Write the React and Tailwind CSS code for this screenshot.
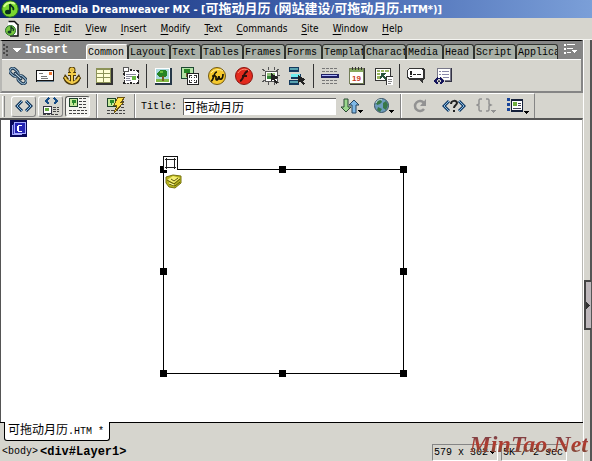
import React from "react";

const mono = "font-['Liberation_Mono','Noto_Sans_CJK_SC',monospace]";
const ui = "font-['DejaVu_Sans_Condensed','Noto_Sans_CJK_SC',sans-serif]";

function Svg({ w = 18, h = 18, children, smooth }) {
  return (
    <svg width={w} height={h} viewBox={`0 0 ${w} ${h}`} fill="none" shapeRendering={smooth ? "auto" : "crispEdges"} aria-hidden="true" className="block shrink-0">
      {children}
    </svg>
  );
}

const Logo = () => (
  <Svg w={18} h={18} smooth>
    <circle cx="9" cy="9" r="8.2" fill="#78d62f" stroke="#276b1b" />
    <path d="M3 7a7 6 0 0 1 11-3" stroke="#d4ff8b" strokeWidth="2" />
    <path d="M9 4v7M9 4c1 3 5 3 3 6" stroke="#06301b" strokeWidth="1.8" />
    <ellipse cx="7" cy="12" rx="3" ry="2.3" fill="#06301b" />
  </Svg>
);

const DocLogo = () => (
  <Svg w={15} h={17} smooth>
    <path d="M3 1h7l3 3v11H3z" fill="#fff" />
    <path d="M3.5 1.5h6l3 3M13 4v12H5" stroke="#111" strokeWidth="1.5" />
    <circle cx="5.5" cy="10.5" r="5" fill="#79c83e" stroke="#286f2c" />
    <path d="M6 6v5M6 6c0 3 4 2 2 5" stroke="#123b25" strokeWidth="1.3" />
    <ellipse cx="4.5" cy="12" rx="2" ry="1.5" fill="#123b25" />
  </Svg>
);

const Link = () => (
  <Svg smooth>
    <g transform="rotate(43 9 9)" strokeLinecap="round">
      <rect x="-1" y="6" width="9" height="6" rx="3" stroke="#17334e" strokeWidth="3" />
      <rect x="10" y="6" width="9" height="6" rx="3" stroke="#17334e" strokeWidth="3" />
      <rect x="-1" y="6" width="9" height="6" rx="3" stroke="#9fc1d8" />
      <rect x="10" y="6" width="9" height="6" rx="3" stroke="#9fc1d8" />
      <path d="M5 9h8" stroke="#17334e" strokeWidth="3" />
      <path d="M5 9h8" stroke="#c8dce7" />
    </g>
  </Svg>
);
const Mail = () => (
  <Svg>
    <path d="M0 3h18v12H0z" fill="#111" />
    <path d="M1 4h16v9H1z" fill="#fff" />
    <path d="M13 5h3v3h-3z" fill="#ed7835" />
    <path d="M3 6h4M5 9h6M5 11h7" stroke="#777" />
    <path d="M1 14h17" stroke="#6c8292" />
  </Svg>
);
const Anchor = () => (
  <Svg smooth>
    <g stroke="#4d3908" strokeWidth="4"><circle cx="9" cy="3" r="1.5" /><path d="M9 5v11M5 7h8M2 10c1 4 4 6 7 6s6-2 7-6" /></g>
    <path d="M0 12l2-5 4 5zM18 12l-2-5-4 5z" fill="#4d3908" />
    <g stroke="#f2cb48" strokeWidth="2"><circle cx="9" cy="3" r="1.5" /><path d="M9 5v11M5 7h8M2 10c1 4 4 5 7 6 3-1 6-2 7-6" /></g>
  </Svg>
);
const TableIcon = () => (
  <Svg>
    <path d="M1 1h17v17H1z" fill="#333" />
    <path d="M1 1h15v15H1z" fill="#8c9358" />
    <path d="M2 3h6v3H2zM9 3h6v3H9zM2 7h6v3H2zM9 7h6v3H9zM2 11h6v4H2zM9 11h6v4H9z" fill="#ffffd5" />
  </Svg>
);
const Layer = () => (
  <Svg>
    <path d="M2 3h14v13H2z" fill="#fff" stroke="#333" strokeDasharray="2 1" />
    <path d="M1 0h5v4H1z" fill="#fff" stroke="#555" />
    <path d="M4 7h10M4 9h6M4 11h4M4 13h5" stroke="#889" />
    <path d="M10 9h4v4h-4z" fill="#68b842" />
    <path d="M1 6h2v2H1zM15 3h2v2h-2zM15 9h2v2h-2zM15 15h2v2h-2zM8 15h2v2H8zM1 15h2v2H1zM8 2h2v2H8z" fill="#222" />
  </Svg>
);
const Picture = () => (
  <Svg>
    <path d="M1 1h17v17H1z" fill="#263848" /><path d="M1 1h15v15H1z" fill="#fff" />
    <path d="M2 2h13v13H2z" fill="#abd9df" /><path d="M2 12h13v3H2z" fill="#82b945" />
    <path d="M6 3h5l2 2v3l-2 2H5L3 8V6z" fill="#258424" /><path d="M6 4h3v2H6z" fill="#68bf3c" /><path d="M8 9h2v5H8z" fill="#765b27" />
  </Svg>
);
const Placeholder = () => (
  <Svg>
    <path d="M0 0h13v12H0z" fill="#1d4731" /><path d="M1 1h11v10H1z" fill="#b4e2a6" />
    <path d="M3 2h6v4H3z" fill="#258424" /><path d="M5 6h2v4H5z" fill="#765b27" />
    <path d="M6 6h12v12H6z" fill="#222" /><path d="M7 7h10v10H7z" fill="#fff" />
    <path d="M8 8h3v1H9v2H8zM16 8h-3v1h2v2h1zM8 16h3v-1H9v-2H8zM16 16h-3v-1h2v-2h1zM10 10h1v1h-1zM13 10h1v1h-1zM10 13h1v1h-1zM13 13h1v1h-1z" fill="#333" />
  </Svg>
);
const Fireworks = () => (
  <Svg smooth>
    <circle cx="9" cy="9" r="8.5" fill="#f5c82c" stroke="#715812" /><path d="M3 6c2-3 8-5 12-2" stroke="#fff09b" />
    <path d="M3 14c3 0 2-9 6-9M4 9h4M8 9v3c0 2 3 1 3-3 0 5 4 4 4-2" stroke="#171305" strokeWidth="1.7" />
  </Svg>
);
const Flash = () => (
  <Svg smooth>
    <circle cx="9" cy="9" r="8.5" fill="#e32a1d" stroke="#8b1611" /><path d="M3 6c2-4 8-5 11-2" stroke="#ff8b72" />
    <path d="M5 14c4-1 3-9 8-10M7 9h5" stroke="#32110d" strokeWidth="2" />
  </Svg>
);
const Rollover = () => (
  <Svg>
    <path d="M0 2l3 2M6 0v3M12 0v3M17 2l-3 2M0 8h3M15 8h3M0 15l3-2M6 15v3M12 15v3M17 16l-3-3" stroke="#555" />
    <path d="M3 4h12v10H3z" fill="#fff" stroke="#555" /><path d="M5 6h8v6H5z" fill="#90bd79" /><path d="M5 9h5v3H5z" fill="#328537" />
    <path d="M9 6l8 5-4 1 3 4-2 1-3-5-2 2z" fill="#222" />
  </Svg>
);
const NavBar = () => (
  <Svg>
    <path d="M0 0h10v5H0zM2 7h10v5H2zM0 13h10v5H0z" fill="#143a5e" />
    <path d="M1 1h8v2H1zM1 14h8v2H1z" fill="#58a2af" /><path d="M2 7h9v3H2z" fill="#70eef0" />
    <path d="M9 8l8 5-4 1 3 3-2 1-3-4-2 2z" fill="#222" />
  </Svg>
);
const Rule = () => (
  <Svg>
    <path d="M1 1h16M1 4h16M1 13h16M1 16h16" stroke="#777" strokeDasharray="3 1" />
    <path d="M0 7h18v4H0z" fill="#202063" /><path d="M1 8h15v1H1z" fill="#aeb8ff" />
  </Svg>
);
const DateIcon = () => (
  <Svg>
    <path d="M2 1h15v17H2z" fill="#333" /><path d="M1 1h14v15H1z" fill="#fff" stroke="#727d56" />
    <path d="M2 2h13v3H2z" fill="#85a85e" /><path d="M4 0v3M7 0v3M10 0v3M13 0v3" stroke="#333" />
    <text x="4" y="14" fontSize="8" fontFamily="Liberation Sans" fontWeight="bold" fill="#c83928">19</text>
  </Svg>
);
const Tabular = () => (
  <Svg>
    <path d="M0 1h16v13H0z" fill="#333" /><path d="M1 2h14v11H1z" fill="#fff" />
    <path d="M2 3h3v2H2zM6 3h3v2H6zM10 3h4v2h-4zM2 6h3v2H2zM2 9h3v3H2z" fill="#9ab65f" />
    <path d="M6 6h5L9 9l4 4-2 1-4-4-2 2z" fill="#28533b" />
    <path d="M11 9h7v9h-7z" fill="#fff" stroke="#333" /><path d="M13 12h4M13 14h4M13 16h3" stroke="#888" />
  </Svg>
);
const Comment = () => (
  <Svg>
    <path d="M2 1h14l2 2v9l-2 1v4l-4-4H2l-2-2V3z" fill="#333" /><path d="M2 2h13l1 2v7H2l-1-2V4z" fill="#fff" />
    <path d="M3 4h2v4H3zM3 9h2v1H3zM6 7h3v1H6zM10 7h4v1h-4z" fill="#222" />
  </Svg>
);
const TagIcon = () => (
  <Svg>
    <path d="M3 1h15v14H3z" fill="#334" /><path d="M3 1h13v12H3z" fill="#fff" stroke="#778" />
    <path d="M5 4h2M8 4h7M5 7h2M8 7h7M9 10h6" stroke="#88a" />
    <path d="M4 11l-3 3 3 3M6 11l3 3-3 3" stroke="#d6d5ce" strokeWidth="4" />
    <path d="M4 11l-3 3 3 3M6 11l3 3-3 3" stroke="#15155b" strokeWidth="2" />
  </Svg>
);
const groups = [
  [["Hyperlink", Link], ["Email Link", Mail], ["Named Anchor", Anchor]],
  [["Insert Table", TableIcon], ["Draw Layer", Layer]],
  [["Image", Picture], ["Image Placeholder", Placeholder], ["Fireworks HTML", Fireworks], ["Flash", Flash], ["Rollover Image", Rollover], ["Navigation Bar", NavBar]],
  [["Horizontal Rule", Rule], ["Date", DateIcon], ["Tabular Data", Tabular]],
  [["Comment", Comment], ["Tag Chooser", TagIcon]],
];

const tabs = [
  ["Common", "w-[42px]"], ["Layout", "w-[42px]"], ["Text", "w-[31px]"], ["Tables", "w-[42px]"],
  ["Frames", "w-[42px]"], ["Forms", "w-[37px]"], ["Templates", "w-[42px]"], ["Characters", "w-[42px]"],
  ["Media", "w-[37px]"], ["Head", "w-[31px]"], ["Script", "w-[42px]"], ["Application", "w-[42px]"],
];

const menus = ["File", "Edit", "View", "Insert", "Modify", "Text", "Commands", "Site", "Window", "Help"];

const CodeView = () => (
  <Svg w={18} h={12} smooth><path d="M7 1L2 6l5 5M11 1l5 5-5 5" stroke="#173759" strokeWidth="3" /><path d="M7 1L2 6l5 5M11 1l5 5-5 5" stroke="#8bc1e8" /></Svg>
);
function PageShape() {
  return <><path d="M0 1h9v9H0z" fill="#1d432b" /><path d="M1 2h7v7H1z" fill="#c6e99a" /><path d="M3 3h4v3H3zM4 6h1v2H4z" fill="#27892c" /><path d="M10 1h8M10 4h8M10 7h8M10 10h8M0 13h18M0 16h18" stroke="#444" strokeDasharray="3 1" /></>;
}
const SplitView = () => (
  <Svg>
    <path d="M7 1L4 4l3 3M12 1l3 3-3 3" stroke="#174d87" strokeWidth="2" />
    <path d="M1 9h8v7H1z" fill="#fff" stroke="#334" /><path d="M3 11h4v3H3z" fill="#65a83d" />
    <path d="M11 10h6M11 12h6M11 14h6M1 17h16" stroke="#444" strokeDasharray="3 1" />
  </Svg>
);
const DesignView = () => <Svg><PageShape /></Svg>;
const LiveData = () => (
  <Svg><PageShape /><path d="M11 0h7l-4 5h3L7 16l3-8H7z" fill="#ffe044" stroke="#6b5414" /></Svg>
);
const Drop = () => <path d="M0 0h5v1H4v1H3v1H2V2H1V1H0z" fill="currentColor" />;
const Transfer = () => (
  <Svg w={22} h={16} smooth>
    <path d="M3 1h4v8h3l-5 5-5-5h3z" fill="#9bd68d" stroke="#2b4a35" />
    <path d="M11 15h4V7h3l-5-5-5 5h3z" fill="#7eb8e7" stroke="#24435d" />
    <g transform="translate(17 12)"><Drop /></g>
  </Svg>
);
const Globe = () => (
  <Svg w={20} h={16} smooth>
    <circle cx="7.5" cy="7.5" r="7" fill="#6d9cbc" stroke="#375062" />
    <path d="M3 3l4-2 1 3-2 2-3 1-1-2zM9 5l3-2 2 4-2 5-3-2zM4 9l4 2-2 3-3-2z" fill="#397747" />
    <path d="M2 5c1-3 4-4 6-3" stroke="#d5edf8" /><g transform="translate(15 12)"><Drop /></g>
  </Svg>
);
const Reload = () => (
  <Svg w={14} h={14} smooth><path d="M11 10a5 5 0 1 1 0-6" stroke="#929292" strokeWidth="2.5" /><path d="M13 0v7H7z" fill="#929292" /></Svg>
);
const Reference = () => (
  <Svg w={24} h={14} smooth>
    <path d="M7 2L2 7l5 5M17 2l5 5-5 5" stroke="#153c67" strokeWidth="3" /><path d="M7 2L2 7l5 5M17 2l5 5-5 5" stroke="#86bce4" />
    <path d="M9 5c0-4 6-4 6-1 0 2-3 2-3 5M12 11v2" stroke="#222" strokeWidth="2" />
  </Svg>
);
const Braces = () => (
  <Svg w={20} h={16} smooth>
    <path d="M6 1H4L3 2v4L1 7l2 1v4l1 1h2M10 1h2l1 1v4l2 1-2 1v4l-1 1h-2" stroke="#929292" strokeWidth="1.5" />
    <g transform="translate(15 12)" color="#929292"><Drop /></g>
  </Svg>
);
const Options = () => (
  <Svg w={22} h={16}>
    <path d="M0 0h3v3H0zM0 5h3v3H0zM0 10h3v3H0z" fill="#17449a" /><path d="M4 1h12v13H4z" fill="#15203a" /><path d="M5 3h10v9H5z" fill="#fff" />
    <path d="M6 4h4v4H6z" fill="#70ae3e" /><path d="M11 5h3M11 7h3M6 10h8" stroke="#445" /><g transform="translate(17 13)"><Drop /></g>
  </Svg>
);

function ToolButton({ label, className = "", children }) {
  return <button type="button" aria-label={label} className={`flex h-[21px] shrink-0 items-center justify-center ${className}`}>{children}</button>;
}

function SelectedLayer() {
  const handles = ["-left-1 -top-1", "left-[115px] -top-1", "-right-1 -top-1", "-left-1 top-[98px]", "-right-1 top-[98px]", "-left-1 -bottom-1", "left-[115px] -bottom-1", "-right-1 -bottom-1"];
  return (
    <div className="absolute left-[162px] top-[49px] h-[205px] w-[241px] border border-black">
      {handles.map((place) => <span key={place} className={`absolute size-[7px] bg-black ${place}`} />)}
      <span className="absolute -left-px -top-[14px] bg-white">
        <Svg w={15} h={14}><path d="M0 0h15v14h-1V1H1v13H0z" fill="#111" /><path d="M2 3h11v1H2zM2 11h11v1H2zM3 2h1v11H3zM11 2h1v11h-1z" fill="#222" /></Svg>
      </span>
      <span className="absolute left-px top-1">
        <Svg w={17} h={15} smooth>
          <path d="M1 3l7-2 8 1v7l-6 5-6-1-3-4z" fill="#b8b51d" stroke="#787410" />
          <path d="M2 6l6-4 7 2-6 5z" fill="#f5ef74" /><path d="M2 6l7 4 6-5M6 5l3 2 4-3M4 10l6 2 5-4" stroke="#5d5911" /><path d="M4 9l5 2" stroke="#ffffb0" />
        </Svg>
      </span>
    </div>
  );
}

export default function App() {
  return (
    <div className={`relative flex min-h-screen flex-col overflow-hidden bg-[#d6d5ce] text-[10px] text-black ${ui}`}>
      <header className="flex h-[18px] items-center gap-px bg-linear-to-r from-[#0b2871] via-[#3e5eaa] to-[#7b9fd8] pl-px font-bold whitespace-nowrap text-white">
        <Logo />
        <h1 className="text-[13px] leading-[18px]"><span className="text-[11px]">Macromedia Dreamweaver MX - [</span>可拖动月历<span className="text-[11px]"> (</span>网站建设<span className="text-[11px]">/</span>可拖动月历<span className="text-[11px]">.HTM*)]</span></h1>
      </header>
      <nav className="flex h-[22px] items-center border-b border-[#f4f4f0] pl-[5px]">
        <DocLogo />
        <div className="flex gap-[14px] pl-[5px]">
          {menus.map((m) => (
            <button type="button" key={m} className="leading-[16px]"><span className="underline underline-offset-2">{m[0]}</span>{m.slice(1)}</button>
          ))}
        </div>
      </nav>

      <div className="flex flex-1">
        <div className="flex min-w-0 flex-1 flex-col">
          <section className="border-t border-r-2 border-b-2 border-l-2 border-t-black border-r-[#858585] border-b-[#858585] border-l-[#b8b8b4]">
            <div className="flex h-[18px] items-end bg-[#858585]">
              <div className={`flex h-[18px] w-[84px] shrink-0 items-center text-[12px] font-bold text-white ${mono}`}>
                <Svg w={6} h={14}><path d="M1 1h2v2H1zM4 3h2v2H4zM1 5h2v2H1zM4 7h2v2H4zM1 9h2v2H1zM4 11h2v2H4z" fill="#484848" /></Svg>
                <button type="button" className="flex items-center gap-1 pl-[5px]">
                  <Svg w={8} h={5}><path d="M0 0h8v1H7v1H6v1H5v1H3V3H2V2H1V1H0z" fill="#fff" /></Svg>Insert
                </button>
              </div>
              <div role="tablist" className={`flex text-[10px] ${mono}`}>
                {tabs.map(([name, width], i) => (
                  <button type="button" role="tab" aria-selected={i === 0} key={name} className={`h-[15px] shrink-0 overflow-hidden rounded-t-[3px] border border-b-0 border-[#30332f] pl-px text-left leading-[15px] ${width} ${i === 0 ? "border-t-white border-l-white bg-[#d6d5ce]" : "bg-[#a9b0a7]"}`}>{name}</button>
                ))}
              </div>
              <button type="button" aria-label="Panel options" className="mr-1 mb-[5px] ml-auto">
                <Svg w={13} h={10}><path d="M0 0h2v2H0zM3 0h8v1H3zM0 4h2v2H0zM3 4h6v1H3zM0 8h2v2H0zM3 8h4v1H3zM8 6h5v1h-1v1h-1v1h-1V8H9V7H8z" fill="#fff" /></Svg>
              </button>
            </div>
            <div className="flex h-[32px] items-center border-t border-white pl-[2px]">
              {groups.map((g, i) => (
                <React.Fragment key={i}>
                  {i > 0 && <span className="flex w-[5px] shrink-0 justify-center"><span className="h-6 w-px bg-[#333]" /></span>}
                  {g.map(([label, Icon]) => <ToolButton key={label} label={label} className="w-[27px]"><Icon /></ToolButton>)}
                </React.Fragment>
              ))}
            </div>
          </section>

          <form className="flex h-[25px] w-[535px] max-w-full items-center border-t border-r border-t-white border-r-[#858585] pl-[2px]" onSubmit={(e) => e.preventDefault()}>
            <span className="h-[21px] w-[3px] shrink-0 border-r border-l border-r-[#858585] border-l-white" />
            <div className="flex shrink-0 gap-[2px] pl-[6px]">
              <ToolButton label="Code view" className="w-[25px] rounded-[3px] border border-[#858585] border-t-white border-l-white"><CodeView /></ToolButton>
              <ToolButton label="Code and design view" className="w-[25px] rounded-[3px] border border-[#858585] border-t-white border-l-white"><SplitView /></ToolButton>
              <ToolButton label="Design view" className="w-[25px] rounded-[3px] border border-white border-t-[#555] border-l-[#555] bg-[#f4f4f0]"><DesignView /></ToolButton>
            </div>
            <span className="ml-[6px] h-full w-[2px] shrink-0 border-r border-l border-r-white border-l-[#858585]" />
            <ToolButton label="Live data view" className="w-[36px]"><LiveData /></ToolButton>
            <span className="h-full w-[2px] shrink-0 border-r border-l border-r-white border-l-[#858585]" />
            <label htmlFor="doc-title" className={`shrink-0 pl-[5px] ${mono}`}>Title:</label>
            <input id="doc-title" defaultValue="可拖动月历" className={`ml-[6px] h-[17px] min-w-0 flex-1 border-t border-l border-[#666] bg-white text-[12px] leading-[15px] outline-none ${mono}`} />
            <ToolButton label="File management" className="w-[32px]"><Transfer /></ToolButton>
            <ToolButton label="Preview in browser" className="w-[32px]"><Globe /></ToolButton>
            <span className="h-full w-[2px] shrink-0 border-r border-l border-r-white border-l-[#858585]" />
            <ToolButton label="Refresh" className="w-[36px]"><Reload /></ToolButton>
            <ToolButton label="Reference" className="w-[32px]"><Reference /></ToolButton>
            <ToolButton label="Code navigation" className="w-[32px]"><Braces /></ToolButton>
            <ToolButton label="View options" className="w-[32px]"><Options /></ToolButton>
          </form>

          <main className="relative min-h-[302px] flex-1 border-t-2 border-r border-l border-t-[#555] border-r-[#b8b8b4] border-l-[#555] bg-white">
            <div className="absolute top-0 left-[9px]">
              <Svg w={17} h={17}>
                <path d="M0 0h17v17H0z" fill="#08085a" /><path d="M2 5h10v10H2z" fill="#a7acff" /><path d="M3 4h10v10H3z" fill="#3434a8" /><path d="M4 2h12v12H4z" fill="#a7acff" /><path d="M5 3h10v10H5z" fill="#2424b3" />
                <path d="M8 5h4v1H9v5h3v1H8l-1-1V6z" fill="#fff" />
              </Svg>
            </div>
            <SelectedLayer />
          </main>

          <div className="flex h-[20px] shrink-0">
            <span className="w-1 border-t border-black" />
            <button type="button" className={`h-[19px] w-[106px] rounded-b-[3px] border border-t-0 border-black bg-white pl-[3px] text-left text-[12px] leading-[18px] whitespace-nowrap ${mono}`}>可拖动月历<span className="text-[10px]">.HTM *</span></button>
            <span className="flex-1 border-t border-black" />
          </div>
          <footer className={`flex h-[19px] shrink-0 items-center ${mono}`}>
            <button type="button" className="pl-[2px]">&lt;body&gt;</button>
            <button type="button" className="pl-[2px] text-[12px] font-bold">&lt;div#Layer1&gt;</button>
            <div className="ml-auto flex gap-[3px] self-end pr-[16px]">
              <button type="button" className="flex h-[17px] w-[66px] items-center gap-[2px] border border-[#858585] border-r-white border-b-white pl-px whitespace-nowrap">579 x 302<Svg w={5} h={3}><Drop /></Svg></button>
              <span className="h-[17px] w-[66px] border border-[#858585] border-r-white border-b-white pl-px leading-[15px]">5K / 2 sec</span>
            </div>
          </footer>
        </div>
        <aside className="flex w-[9px] shrink-0 flex-col border-r-2 border-l border-r-[#555] border-l-white pt-[240px]">
          <button type="button" aria-label="Collapse panels" className="flex h-[50px] w-[7px] items-center border-2 border-r-0 border-[#444] bg-[#bdb7bb]">
            <Svg w={4} h={7}><path d="M0 0h1v1h1v1h1v1h1v1H3v1H2v1H1v1H0z" fill="#333" /></Svg>
          </button>
        </aside>
      </div>
      <div className="pointer-events-none absolute right-1 bottom-[3px] bg-linear-to-b from-[#493c52] via-[#b43a2c] to-[#59463c] bg-clip-text font-['Liberation_Serif',serif] text-[24px] leading-[28px] font-bold text-transparent italic">MinTao.Net</div>
    </div>
  );
}
